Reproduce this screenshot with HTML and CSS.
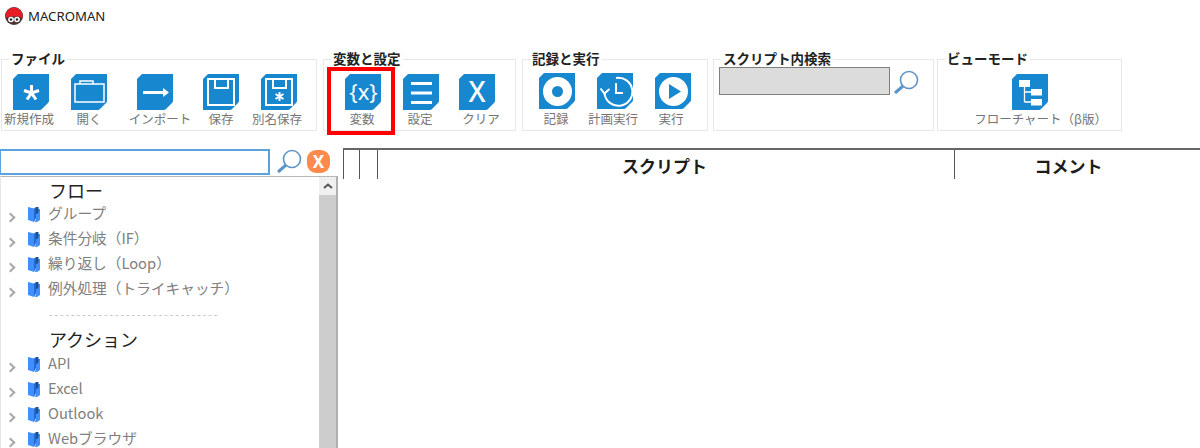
FILE: index.html
```html
<!DOCTYPE html>
<html lang="ja">
<head>
<meta charset="utf-8">
<title>MACROMAN</title>
<link rel="stylesheet" href="styles.css">
</head>
<body>
<svg class="defs" width="0" height="0" aria-hidden="true">
  <defs>
    <path id="tile" d="M5 0H36V27Q36 28 35 29L29 35Q28 36 27 36H0V5Z" fill="#1787cf"/>
    <g id="lens" fill="none" stroke="#5c96c8">
      <circle cx="16" cy="10" r="8.500" stroke-width="1.600"/>
      <path d="M10 16L2 23" stroke-width="3"/>
    </g>
    <g id="book">
      <path d="M0 0L6 1.500V15L0 13Z" fill="#3f8fff"/>
      <path d="M6 1.500L8 0V11L6 15Z" fill="#2467d8"/>
      <path d="M8 2H12V13L9 15H7L8 11Z" fill="#3f8fff"/>
      <path d="M8 0H10.500V5L9 7H8Z" fill="#1f4f8f"/>
    </g>
  </defs>
</svg>

<header class="titlebar">
  <svg class="logo" viewBox="0 0 18 18">
    <circle cx="9" cy="9" r="9" fill="#4a3434"/>
    <path d="M0.500 9A8.500 8.500 0 0 1 17.500 9V11L13 9.500H5L0.500 11Z" fill="#e81c24"/>
    <circle cx="6" cy="12.500" r="2.800" fill="#fff"/>
    <circle cx="12" cy="12.500" r="2.800" fill="#fff"/>
    <circle cx="6" cy="12.500" r="1.200" fill="#222"/>
    <circle cx="12" cy="12.500" r="1.200" fill="#222"/>
  </svg>
  <span class="app-name">MACROMAN</span>
</header>

<section class="ribbon">
  <div class="group group-file">
    <div class="group-title">ファイル</div>
    <div class="tools">
      <div class="tool"><svg class="icon" viewBox="0 0 36 36"><use href="#tile"/><path d="M18.500 11V19M18.500 19L11 16.500M18.500 19L26 16.500M18.500 19L14 25.500M18.500 19L23 25.500" stroke="#fff" stroke-width="3" fill="none"/></svg><span class="label shift-l2">新規作成</span></div>
      <div class="tool"><svg class="icon" viewBox="0 0 36 36"><use href="#tile"/><path d="M4 10H33V28H4ZM9 10V7H22V10" stroke="#fff" stroke-width="1.500" fill="none"/></svg><span class="label">開く</span></div>
      <div class="tool tool-wide"><svg class="icon" viewBox="0 0 36 36"><use href="#tile"/><path d="M6 18.500H28" stroke="#fff" stroke-width="3" fill="none"/><path d="M26 14L32 18.500L26 23Z" fill="#fff"/></svg><span class="label shift-r5">インポート</span></div>
      <div class="tool"><svg class="icon" viewBox="0 0 36 36"><use href="#tile"/><path d="M5 5H31V31H5ZM12 5V14H25V5" stroke="#fff" stroke-width="2" fill="none"/></svg><span class="label">保存</span></div>
      <div class="tool"><svg class="icon" viewBox="0 0 36 36"><use href="#tile"/><path d="M5 5H31V31H5ZM12 5V14H25V5" stroke="#fff" stroke-width="2" fill="none"/><path d="M18.500 18V27M14.500 20L22.500 25M22.500 20L14.500 25" stroke="#fff" stroke-width="2" fill="none"/></svg><span class="label shift-l2">別名保存</span></div>
    </div>
  </div>

  <div class="group group-vars">
    <div class="group-title">変数と設定</div>
    <div class="tools">
      <div class="tool tool-highlight"><svg class="icon" viewBox="0 0 36 36"><use href="#tile"/><text class="icon-text" x="18.500" y="26" font-size="22">{x}</text></svg><span class="label shift-l1">変数</span></div>
      <div class="tool"><svg class="icon" viewBox="0 0 36 36"><use href="#tile"/><path d="M8 9.500H29M8 19H29M8 28.500H29" stroke="#fff" stroke-width="3" fill="none"/></svg><span class="label shift-l1">設定</span></div>
      <div class="tool tool-narrow"><svg class="icon" viewBox="0 0 36 36"><use href="#tile"/><text class="icon-text icon-text-bold" x="18" y="28" font-size="28">X</text></svg><span class="label shift-r4">クリア</span></div>
    </div>
  </div>

  <div class="group group-run">
    <div class="group-title">記録と実行</div>
    <div class="tools tools-high">
      <div class="tool"><svg class="icon" viewBox="0 0 36 36"><use href="#tile"/><circle cx="18.500" cy="18.500" r="14.500" fill="#fff"/><circle cx="18.500" cy="18.500" r="5.500" fill="#1787cf"/></svg><span class="label shift-l1">記録</span></div>
      <div class="tool"><svg class="icon" viewBox="0 0 36 36"><use href="#tile"/><path d="M19 5A14 14 0 1 1 7.500 20.500" stroke="#fff" stroke-width="2" fill="none"/><path d="M3.500 15.500L7.500 20.500L12.500 16" stroke="#fff" stroke-width="2" fill="none"/><path d="M19 10V20H26" stroke="#fff" stroke-width="2" fill="none"/></svg><span class="label shift-l2">計画実行</span></div>
      <div class="tool"><svg class="icon" viewBox="0 0 36 36"><use href="#tile"/><circle cx="18.500" cy="18.500" r="14.500" fill="#fff"/><path d="M14 11L26 18.500L14 26Z" fill="#1787cf"/></svg><span class="label shift-l2">実行</span></div>
    </div>
  </div>

  <div class="group group-search">
    <div class="group-title">スクリプト内検索</div>
    <div class="search-row">
      <div class="script-search"></div>
      <svg class="lens" viewBox="0 0 26 26"><use href="#lens"/></svg>
    </div>
  </div>

  <div class="group group-view">
    <div class="group-title">ビューモード</div>
    <div class="tools tools-center">
      <div class="tool tool-flow"><svg class="icon" viewBox="0 0 36 36"><use href="#tile"/><path d="M12.500 13V28M12.500 18H20M12.500 28H20" stroke="#fff" stroke-width="1.300" fill="none"/><path d="M7 6H18V13H7ZM19 15H30V21.500H19ZM19 25H30V31.500H19Z" fill="#fff"/></svg><span class="label shift-r11">フローチャート（β版）</span></div>
    </div>
  </div>
</section>

<main class="main">
  <aside class="sidebar">
    <div class="side-search">
      <div class="side-input"></div>
      <svg class="lens" viewBox="0 0 26 26"><use href="#lens"/></svg>
      <div class="clear-badge">X</div>
    </div>
    <div class="tree-panel">
      <div class="tree">
        <div class="tree-heading">フロー</div>
        <div class="tree-row"><span class="chev"></span><svg class="book" viewBox="0 0 12 15"><use href="#book"/></svg><span>グループ</span></div>
        <div class="tree-row"><span class="chev"></span><svg class="book" viewBox="0 0 12 15"><use href="#book"/></svg><span>条件分岐（IF）</span></div>
        <div class="tree-row"><span class="chev"></span><svg class="book" viewBox="0 0 12 15"><use href="#book"/></svg><span>繰り返し（Loop）</span></div>
        <div class="tree-row"><span class="chev"></span><svg class="book" viewBox="0 0 12 15"><use href="#book"/></svg><span>例外処理（トライキャッチ）</span></div>
        <div class="tree-sep">-------------------------------</div>
        <div class="tree-heading tree-heading-second">アクション</div>
        <div class="tree-row"><span class="chev"></span><svg class="book" viewBox="0 0 12 15"><use href="#book"/></svg><span>API</span></div>
        <div class="tree-row"><span class="chev"></span><svg class="book" viewBox="0 0 12 15"><use href="#book"/></svg><span>Excel</span></div>
        <div class="tree-row"><span class="chev"></span><svg class="book" viewBox="0 0 12 15"><use href="#book"/></svg><span>Outlook</span></div>
        <div class="tree-row"><span class="chev"></span><svg class="book" viewBox="0 0 12 15"><use href="#book"/></svg><span>Webブラウザ</span></div>
      </div>
      <div class="scrollbar">
        <div class="scroll-up"><svg viewBox="0 0 10 6" width="10" height="6"><path d="M1 5L5 1.500L9 5" fill="none" stroke="#555" stroke-width="2"/></svg></div>
        <div class="scroll-thumb"></div>
      </div>
    </div>
  </aside>
  <div class="table-head">
    <div class="th"></div>
    <div class="th"></div>
    <div class="th th-script">スクリプト</div>
    <div class="th th-comment">コメント</div>
  </div>
</main>
</body>
</html>
```
FILE: styles.css
```css
* { box-sizing: border-box; }
html, body { margin: 0; height: 448px; overflow: hidden; background: #fff; }
body { font-family: "Noto Sans CJK JP", "Noto Sans", sans-serif; color: #1c1c1c; }
.defs { position: absolute; }

.titlebar { height: 59px; padding: 7px 0 0 5px; display: flex; align-items: flex-start; gap: 5px; }
.logo { width: 18px; height: 18px; }
.app-name { font: 13.2px/18px "Noto Sans", sans-serif; color: #222; }

.ribbon { display: flex; height: 72px; padding-left: 1px; }
.group { border: 1.5px solid #e8e8e8; height: 72px; flex: none; }
.group-file { width: 316px; margin-right: 6px; }
.group-vars { width: 193px; margin-right: 6px; }
.group-run { width: 186px; margin-right: 5px; }
.group-search { width: 221px; margin-right: 3px; }
.group-view { width: 185px; }
.group-title {
  width: fit-content; height: 16px; margin: -10px 0 1px 7px; padding: 0 2px;
  background: #fff; font-size: 13.5px; line-height: 16px; font-weight: 700; color: #222;
}

.tools { display: flex; padding-top: 7px; }
.group-vars .tools { padding-left: 10px; }
.group-run .tools { padding-left: 5px; padding-top: 6px; }
.tools-center { justify-content: center; }

.tool { width: 58px; display: flex; flex-direction: column; align-items: center; position: relative; }
.tool-wide { width: 74px; }
.tool-narrow { width: 54px; }
.tool-flow { width: 130px; }
.icon { width: 36px; height: 36px; display: block; overflow: visible; }
.icon-text { fill: #fff; text-anchor: middle; font-family: "Noto Sans", sans-serif; }
.icon-text-bold { font-weight: 500; }
.label { font-size: 12.5px; line-height: 16px; margin-top: 1px; color: #757575; white-space: nowrap; }
.tools-high .label { margin-top: 2px; }
.shift-l1 { transform: translateX(-1px); }
.shift-l2 { transform: translateX(-2px); }
.shift-r4 { transform: translateX(4px); }
.shift-r5 { transform: translateX(5px); }
.shift-r11 { transform: translateX(11px); }
.tool-highlight::after {
  content: ""; box-sizing: border-box; position: absolute; left: -7px; top: -7px; width: 68px; height: 68px;
  border: 4px solid #f00;
}

.search-row { display: flex; padding-left: 5px; align-items: flex-start; }
.script-search { width: 171px; height: 28px; background: #dcdcdc; border: 1.5px solid #7f7f7f; }
.lens { width: 26px; height: 26px; flex: none; }
.search-row .lens { margin: 3px 0 0 3px; }

.main { display: flex; margin-top: 17px; }
.sidebar { width: 338px; flex: none; }
.side-search { display: flex; height: 28px; padding-top: 1px; align-items: flex-start; }
.side-input { width: 271px; height: 26px; margin-left: -1px; border: 2px solid #5aa3dc; }
.side-search .lens { margin: 0 0 0 6px; }
.clear-badge {
  width: 23px; height: 23px; margin: 1px 0 0 5px; border-radius: 9px; background: #ff8a4c; color: #fff;
  font: 700 17px/23px "Noto Sans", sans-serif; text-align: center;
}
.tree-panel { display: flex; height: 272px; border-top: 1px solid #b8b8b8; border-right: 2px solid #b0b0b0; border-left: 1px solid #e8e8e8; }
.tree { flex: 1; min-width: 0; }
.tree-heading { height: 24px; padding-left: 48px; font-size: 18px; line-height: 26px; color: #222; }
.tree-heading-second { height: 25px; }
.tree-row { height: 25px; display: flex; font-size: 14.7px; line-height: 23px; color: #808080; white-space: nowrap; }
.chev { width: 7px; height: 7px; margin: 12.5px 0 0 6px; border-top: 2px solid #a8a8a8; border-right: 2px solid #a8a8a8; transform: rotate(45deg); flex: none; }
.book { width: 12px; height: 15px; margin: 6px 8px 0 14px; flex: none; }
.tree-sep { height: 25px; padding-left: 48px; font: 11px/25px "Noto Sans", sans-serif; letter-spacing: 1.95px; color: #c4c4c4; overflow: hidden; white-space: nowrap; }
.scrollbar { width: 17px; flex: none; background: #cdcdcd; }
.scroll-up { height: 18px; background: #f0f0f0; display: flex; align-items: center; justify-content: center; }

.table-head {
  margin-left: 5px; flex: 1; height: 31px; display: grid; grid-template-columns: 16px 18px 577px 228px 1fr;
  border-top: 2px solid #666;
}
.th { border-left: 1.5px solid #555; text-align: center; font-size: 17px; font-weight: 700; line-height: 27px; padding-top: 2px; color: #1c1c1c; }
.th-script { padding-right: 3px; }
```
